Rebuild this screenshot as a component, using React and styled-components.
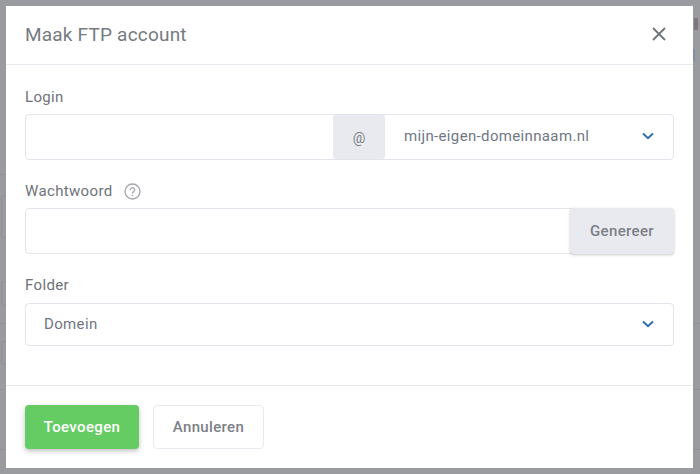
import React from "react";
import styled, { createGlobalStyle } from "styled-components";

const Global = createGlobalStyle`
  html, body { margin: 0; padding: 0; }
  body { font-family: Roboto, "Liberation Sans", sans-serif; }
`;

const Backdrop = styled.div`
  position: relative;
  width: 700px;
  height: 474px;
  box-sizing: border-box;
  padding: 6px 7px 6px 6px;
  background: #9a9b9e;
  overflow: hidden;
`;

const Ghost = styled.div`
  position: absolute;
  left: ${(p) => p.$x}px;
  top: ${(p) => p.$y}px;
  width: ${(p) => p.$w}px;
  height: ${(p) => p.$h}px;
  background: ${(p) => p.$c || "#919296"};
`;

const GhostBox = styled.div`
  position: absolute;
  left: 1px;
  top: ${(p) => p.$y}px;
  width: 12px;
  height: ${(p) => p.$h}px;
  box-sizing: border-box;
  border: 1px solid #8f9094;
  border-radius: 3px;
`;

const Modal = styled.div`
  position: relative;
  height: 462px;
  background: #fff;
  display: flex;
  flex-direction: column;
  color: #6d7179;
`;

const Header = styled.header`
  height: 59px;
  flex: none;
  box-sizing: border-box;
  display: flex;
  align-items: center;
  justify-content: space-between;
  padding: 0 27px 2px 19px;
  border-bottom: 1px solid #e9eaef;
`;

const Title = styled.h2`
  margin: 0;
  font-size: 19px;
  font-weight: 400;
  letter-spacing: 0.2px;
  color: #767a81;
`;

const Close = styled.button`
  display: flex;
  padding: 0;
  border: 0;
  background: none;
  color: #6f737a;
`;

const Body = styled.div`
  flex: 1;
  padding: 23px 19px 0;
  display: flex;
  flex-direction: column;
`;

const Label = styled.label`
  display: flex;
  align-items: center;
  gap: 11px;
  height: 18px;
  margin-bottom: ${(p) => p.$mb || 8}px;
  font-size: 15px;
  letter-spacing: 0.35px;
  color: #6f7379;
`;

const Field = styled.div`
  display: flex;
  height: ${(p) => p.$h}px;
  margin-bottom: ${(p) => p.$mb}px;
  box-sizing: border-box;
  border: 1px solid #e3e4ec;
  border-radius: 4px;
  background: #fff;
`;

const Input = styled.input`
  flex: 1;
  min-width: 0;
  border: 0;
  padding: 0 18px;
  background: transparent;
  outline: none;
`;

const Addon = styled.span`
  width: 52px;
  flex: none;
  display: flex;
  align-items: center;
  justify-content: center;
  padding-top: 2px;
  box-sizing: border-box;
  background: #e9eaef;
  border-radius: 3px;
  font-size: 14px;
  color: #7b7f86;
`;

const Select = styled.div`
  flex: ${(p) => (p.$fixed ? "0 0 288px" : "1")};
  display: flex;
  align-items: center;
  justify-content: space-between;
  padding: ${(p) => (p.$fixed ? "0 19px 2px 19px" : "0 19px 2px 18px")};
  box-sizing: border-box;
  font-size: 15px;
  letter-spacing: 0.35px;
  color: #6f7683;
`;

const Generate = styled.button`
  width: 104px;
  flex: none;
  margin: -1px -1px -1px 0;
  border: 0;
  border-radius: 4px;
  background: #e9eaef;
  box-shadow: 0 1px 3px rgba(0, 0, 0, 0.22);
  font: 500 15px Roboto, sans-serif;
  letter-spacing: 0.35px;
  color: #7c8087;
`;

const Footer = styled.footer`
  height: 83px;
  flex: none;
  box-sizing: border-box;
  border-top: 1px solid #e9eaef;
  padding: 19px 19px 0;
  display: flex;
  align-items: flex-start;
  gap: 14px;
`;

const Primary = styled.button`
  width: 114px;
  height: 44px;
  border: 0;
  border-radius: 4px;
  background: #64cc63;
  box-shadow: 0 2px 5px rgba(0, 0, 0, 0.25);
  font: 500 15px Roboto, sans-serif;
  letter-spacing: 0.35px;
  color: #fff;
`;

const Secondary = styled.button`
  width: 111px;
  height: 44px;
  box-sizing: border-box;
  border: 1px solid #e9eaef;
  border-radius: 4px;
  background: #fff;
  font: 500 15px Roboto, sans-serif;
  letter-spacing: 0.35px;
  color: #7c8087;
`;

const Chevron = () => (
  <svg width="12" height="8" viewBox="0 0 12 8" fill="none">
    <path d="M1 1.5 6 6.2 11 1.5" stroke="#2f6fb3" strokeWidth="2" />
  </svg>
);

const CloseIcon = () => (
  <svg width="14" height="14" viewBox="0 0 14 14" fill="none">
    <path d="M1 1 13 13M13 1 1 13" stroke="currentColor" strokeWidth="1.8" />
  </svg>
);

const Help = () => (
  <svg width="17" height="17" viewBox="0 0 17 17" fill="none" stroke="#a3a6ab">
    <circle cx="8.5" cy="8.5" r="7.5" strokeWidth="1.3" />
    <path d="M6.3 6.8a2.2 2.2 0 1 1 3.5 1.8c-.8.5-1.3.9-1.3 1.9" strokeWidth="1.3" />
    <circle cx="8.5" cy="12.6" r=".8" fill="#a3a6ab" stroke="none" />
  </svg>
);

export default function App() {
  return (
    <Backdrop>
      <Global />
      <Ghost $x={0} $y={174} $w={6} $h={1} />
      <Ghost $x={0} $y={323} $w={6} $h={1} />
      <Ghost $x={0} $y={389} $w={6} $h={1} />
      <Ghost $x={0} $y={449} $w={6} $h={1} />
      <GhostBox $y={195} $h={43} />
      <GhostBox $y={281} $h={25} />
      <GhostBox $y={341} $h={24} />
      <Ghost $x={693} $y={323} $w={7} $h={1} />
      <Ghost $x={693} $y={389} $w={7} $h={1} />
      <Ghost $x={693} $y={449} $w={7} $h={1} />
      <Ghost $x={694} $y={18} $w={4} $h={12} $c="#80767f" />
      <Ghost $x={693} $y={49} $w={2} $h={12} $c="#7d8ea5" />
      <Modal>
        <Header>
          <Title>Maak FTP account</Title>
          <Close aria-label="Sluiten">
            <CloseIcon />
          </Close>
        </Header>
        <Body>
          <Label>Login</Label>
          <Field $h={46} $mb={22}>
            <Input />
            <Addon>@</Addon>
            <Select $fixed>
              mijn-eigen-domeinnaam.nl
              <Chevron />
            </Select>
          </Field>
          <Label>
            Wachtwoord
            <Help />
          </Label>
          <Field $h={46} $mb={22}>
            <Input />
            <Generate>Genereer</Generate>
          </Field>
          <Label $mb={9}>Folder</Label>
          <Field $h={43} $mb={0}>
            <Select>
              Domein
              <Chevron />
            </Select>
          </Field>
        </Body>
        <Footer>
          <Primary>Toevoegen</Primary>
          <Secondary>Annuleren</Secondary>
        </Footer>
      </Modal>
    </Backdrop>
  );
}
